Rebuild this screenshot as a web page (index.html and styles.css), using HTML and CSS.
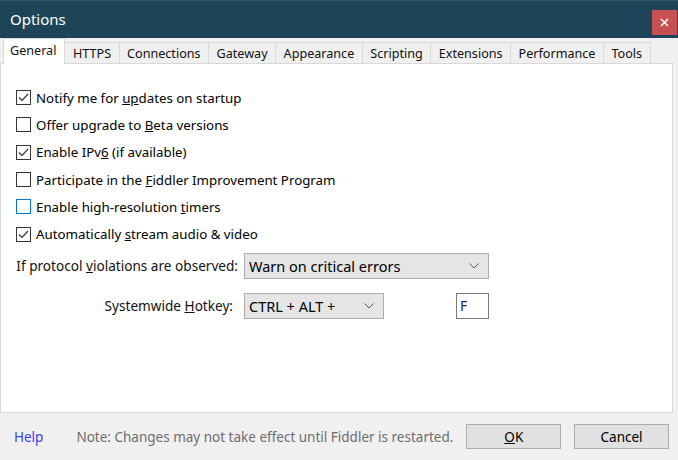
FILE: index.html
```html
<!DOCTYPE html>
<html>
<head>
<meta charset="utf-8">
<link rel="stylesheet" href="styles.css">
</head>
<body>
<div class="window">
  <div class="titlebar">
    <span class="title">Options</span>
    <div class="close">
      <svg width="9" height="9" viewBox="0 0 9 9"><path d="M1 1L8 8M8 1L1 8" stroke="#fff" stroke-width="1.6"/></svg>
    </div>
  </div>
  <div class="tabs">
    <div class="tab active">General</div>
    <div class="tab">HTTPS</div>
    <div class="tab">Connections</div>
    <div class="tab">Gateway</div>
    <div class="tab">Appearance</div>
    <div class="tab">Scripting</div>
    <div class="tab">Extensions</div>
    <div class="tab">Performance</div>
    <div class="tab">Tools</div>
  </div>
  <div class="panel">
    <div class="checks">
      <div class="check"><span class="box"><svg width="13" height="13" viewBox="0 0 13 13"><path d="M2 6.5L5 9.5L11 3" fill="none" stroke="#333" stroke-width="1.2"/></svg></span><span>Notify me for <u>up</u>dates on startup</span></div>
      <div class="check"><span class="box"></span><span>Offer upgrade to <u>B</u>eta versions</span></div>
      <div class="check"><span class="box"><svg width="13" height="13" viewBox="0 0 13 13"><path d="M2 6.5L5 9.5L11 3" fill="none" stroke="#333" stroke-width="1.2"/></svg></span><span>Enable IPv<u>6</u> (if available)</span></div>
      <div class="check"><span class="box"></span><span>Participate in the <u>F</u>iddler Improvement Program</span></div>
      <div class="check"><span class="box focus"></span><span>Enable high-resolution <u>t</u>imers</span></div>
      <div class="check"><span class="box"><svg width="13" height="13" viewBox="0 0 13 13"><path d="M2 6.5L5 9.5L11 3" fill="none" stroke="#333" stroke-width="1.2"/></svg></span><span>Automatically <u>s</u>tream audio &amp; video</span></div>
    </div>
    <div class="form">
      <div class="label">If protocol <u>v</u>iolations are observed:</div>
      <div class="select wide"><span>Warn on critical errors</span><svg width="10" height="6" viewBox="0 0 10 6"><path d="M0.5 0.5L5 5L9.5 0.5" fill="none" stroke="#555" stroke-width="1"/></svg></div>
      <div class="label short">Systemwide <u>H</u>otkey:</div>
      <div class="hotkey">
        <div class="select narrow"><span>CTRL + ALT +</span><svg width="10" height="6" viewBox="0 0 10 6"><path d="M0.5 0.5L5 5L9.5 0.5" fill="none" stroke="#555" stroke-width="1"/></svg></div>
        <div class="textbox">F</div>
      </div>
    </div>
  </div>
  <div class="footer">
    <span class="help">Help</span>
    <span class="note">Note: Changes may not take effect until Fiddler is restarted.</span>
    <div class="btn ok"><u>O</u>K</div>
    <div class="btn">Cancel</div>
  </div>
</div>
</body>
</html>
```
FILE: styles.css
```css
* { box-sizing: border-box; }
html, body { margin: 0; padding: 0; }
body {
  width: 678px;
  height: 460px;
  overflow: hidden;
  font-family: "Noto Sans", "Open Sans", sans-serif;
  font-size: 13.3px;
  color: #000;
  background: #f0f0f0;
}
.window {
  width: 678px;
  height: 460px;
  display: flex;
  flex-direction: column;
}
.titlebar {
  height: 38px;
  flex: none;
  background: #1d4458;
  border-top: 1px solid #2d5568;
  display: flex;
  align-items: center;
  justify-content: space-between;
  padding-left: 10px;
}
.title {
  color: #fff;
  font-size: 15px;
  margin-top: -2px;
}
.close {
  width: 25px;
  height: 25px;
  background: #c75050;
  display: flex;
  align-items: center;
  justify-content: center;
  margin-right: 1px;
  margin-top: 6px;
}
.tabs {
  display: flex;
  align-items: flex-end;
  height: 25px;
  padding-left: 3px;
  flex: none;
  position: relative;
  z-index: 1;
  font-size: 12.6px;
}
.tab {
  height: 21px;
  padding: 0 7.5px;
  border: 1px solid #d9d9d9;
  border-bottom: none;
  border-left: none;
  background: #f0f0f0;
  display: flex;
  align-items: center;
  color: #111;
  white-space: nowrap;
}
.tab.active {
  background: #fff;
  border-left: 1px solid #d9d9d9;
  padding: 0 8px 2px 6px;
  margin-bottom: -1px;
  height: 26px;
}
.panel {
  background: #fff;
  border: 1px solid #d9d9d9;
  margin: 0 5px 0 0;
  height: 350px;
  flex: none;
  padding-top: 20px;
}
.checks {
  display: flex;
  flex-direction: column;
  padding-left: 15px;
}
.check {
  height: 27.3px;
  display: flex;
  align-items: center;
  white-space: nowrap;
}
.box {
  width: 15px;
  height: 15px;
  border: 1px solid #333;
  background: #fff;
  margin-right: 5px;
  display: flex;
  align-items: center;
  justify-content: center;
  flex: none;
}
.box.focus { border-color: #0078d7; }
.form {
  display: grid;
  grid-template-columns: 237px 245px;
  column-gap: 6px;
  row-gap: 14px;
  margin-top: 5px;
}
.label {
  text-align: right;
  align-self: center;
  white-space: nowrap;
  color: #111;
  font-size: 13.6px;
}
.label.short { padding-right: 5px; }
.select {
  height: 26px;
  background: #e5e5e5;
  border: 1px solid #adadad;
  display: flex;
  align-items: center;
  justify-content: space-between;
  padding: 0 9px 0 4px;
  font-size: 14.5px;
}
.select.narrow { width: 140px; }
.hotkey {
  display: flex;
  justify-content: space-between;
}
.textbox {
  width: 33px;
  height: 26px;
  border: 1px solid #7a7a7a;
  background: #fff;
  padding-left: 3px;
  display: flex;
  align-items: center;
  color: #1a2a66;
  font-size: 14px;
}
.footer {
  flex: 1;
  display: flex;
  align-items: center;
  padding: 0 9px 0 14px;
}
.help {
  color: #3b3bf0;
  font-size: 13.5px;
}
.note {
  color: #6d6d6d;
  margin-left: 33px;
  flex: 1;
  white-space: nowrap;
  font-size: 13.5px;
}
.btn {
  width: 95px;
  height: 25px;
  background: #e1e1e1;
  border: 1px solid #adadad;
  display: flex;
  align-items: center;
  justify-content: center;
  margin-left: 13px;
  font-size: 13.5px;
}
```
